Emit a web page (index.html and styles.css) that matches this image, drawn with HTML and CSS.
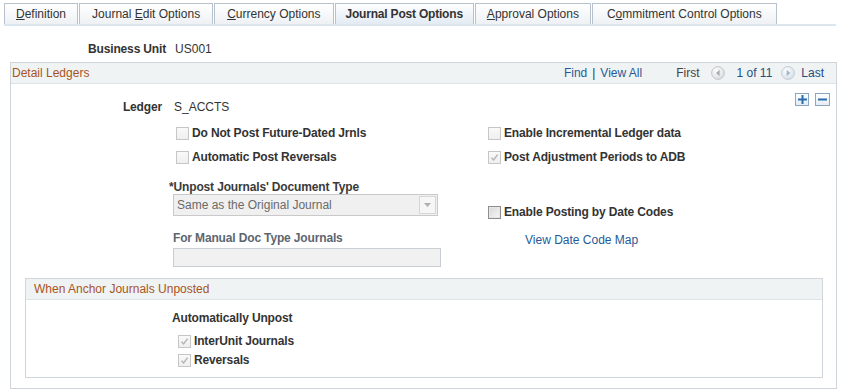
FILE: index.html
```html
<!DOCTYPE html>
<html>
<head>
<meta charset="utf-8">
<link rel="stylesheet" href="styles.css">
</head>
<body>
<div class="tabs">
  <div class="tab"><span><u>D</u>efinition</span></div>
  <div class="tab"><span>Journal <u>E</u>dit Options</span></div>
  <div class="tab"><span><u>C</u>urrency Options</span></div>
  <div class="tab active"><span>Journal Post Options</span></div>
  <div class="tab"><span><u>A</u>pproval Options</span></div>
  <div class="tab"><span>C<u>o</u>mmitment Control Options</span></div>
</div>

<div class="bu-row">
  <span class="lbl bu-lbl">Business Unit</span>
  <span class="val">US001</span>
</div>

<section class="box outer">
  <div class="box-head">
    <span class="box-title">Detail Ledgers</span>
    <div class="nav">
      <a class="link">Find</a><span class="sep">|</span><a class="link">View All</a>
      <span class="first">First</span>
      <svg class="navicon" width="14" height="14" viewBox="0 0 14 14"><defs><radialGradient id="g1" cx="0.4" cy="0.35" r="0.7"><stop offset="0" stop-color="#ffffff"/><stop offset="1" stop-color="#d6d9dc"/></radialGradient></defs><circle cx="7" cy="7" r="6.4" fill="url(#g1)" stroke="#c4c8cc" stroke-width="1"/><path d="M8.6 3.8 L4.9 7 L8.6 10.2 Z" fill="#a9adb1"/></svg>
      <span class="count">1 of 11</span>
      <svg class="navicon" width="14" height="14" viewBox="0 0 14 14"><defs><radialGradient id="g2" cx="0.4" cy="0.35" r="0.7"><stop offset="0" stop-color="#ffffff"/><stop offset="1" stop-color="#d3dde8"/></radialGradient></defs><circle cx="7" cy="7" r="6.4" fill="url(#g2)" stroke="#c3ccd6" stroke-width="1"/><path d="M5.6 3.8 L9.3 7 L5.6 10.2 Z" fill="#9fb5cc"/></svg>
      <a class="link last">Last</a>
    </div>
  </div>
  <div class="box-body">
    <div class="ledger-row">
      <div class="ledger">
        <span class="lbl ledger-lbl">Ledger</span>
        <span class="val">S_ACCTS</span>
      </div>
      <div class="rowbtns">
        <span class="rbtn"><svg width="9" height="9" viewBox="0 0 9 9"><path d="M3.5 0h2v3.5H9v2H5.5V9h-2V5.5H0v-2h3.5z" fill="#2a6cad"/></svg></span>
        <span class="rbtn minus"><svg width="9" height="9" viewBox="0 0 9 9"><path d="M0 3.5h9v2H0z" fill="#2a6cad"/></svg></span>
      </div>
    </div>

    <div class="cols">
      <div class="col-left">
        <label class="cb-row"><span class="cb dis"></span><span class="cb-lbl">Do Not Post Future-Dated Jrnls</span></label>
        <label class="cb-row"><span class="cb dis"></span><span class="cb-lbl">Automatic Post Reversals</span></label>
        <div class="field-lbl req">*Unpost Journals' Document Type</div>
        <div class="select">
          <span class="select-text">Same as the Original Journal</span>
          <span class="select-btn"><svg width="7" height="4" viewBox="0 0 7 4"><path d="M0 0h7L3.5 4z" fill="#b0b0b0"/></svg></span>
        </div>
        <div class="field-lbl manual">For Manual Doc Type Journals</div>
        <div class="input"></div>
      </div>
      <div class="col-right">
        <label class="cb-row"><span class="cb dis"></span><span class="cb-lbl">Enable Incremental Ledger data</span></label>
        <label class="cb-row"><span class="cb dis checked"><svg width="9" height="9" viewBox="0 0 9 9"><path d="M1.5 4.8 L3.6 7 L7.6 1.6" fill="none" stroke="#b4b4b4" stroke-width="1.4"/></svg></span><span class="cb-lbl">Post Adjustment Periods to ADB</span></label>
        <label class="cb-row dates"><span class="cb en"></span><span class="cb-lbl">Enable Posting by Date Codes</span></label>
        <a class="link map">View Date Code Map</a>
      </div>
    </div>

    <section class="box inner">
      <div class="box-head">
        <span class="box-title">When Anchor Journals Unposted</span>
      </div>
      <div class="inner-body">
        <div class="auto-lbl">Automatically Unpost</div>
        <label class="cb-row small"><span class="cb dis checked"><svg width="9" height="9" viewBox="0 0 9 9"><path d="M1.5 4.8 L3.6 7 L7.6 1.6" fill="none" stroke="#b4b4b4" stroke-width="1.4"/></svg></span><span class="cb-lbl">InterUnit Journals</span></label>
        <label class="cb-row small"><span class="cb dis checked"><svg width="9" height="9" viewBox="0 0 9 9"><path d="M1.5 4.8 L3.6 7 L7.6 1.6" fill="none" stroke="#b4b4b4" stroke-width="1.4"/></svg></span><span class="cb-lbl">Reversals</span></label>
      </div>
    </section>
  </div>
</section>
</body>
</html>
```

FILE: styles.css
```css
* { box-sizing: border-box; }
html, body { background: #ffffff; }
body {
  margin: 0;
  font-family: "Liberation Sans", Arial, sans-serif;
  font-size: 12px;
  line-height: 14px;
  color: #333333;
}

/* tabs */
.tabs {
  display: flex;
  gap: 1px;
  margin: 3px 0 0 4px;
  width: 832px;
  border-bottom: 2px solid #dce6ef;
}
.tab {
  height: 21px;
  padding: 0 11px;
  border: 1px solid #b7c2cc;
  border-bottom: none;
  background: linear-gradient(#ffffff, #eef1f4);
  color: #333333;
  display: flex;
  align-items: center;
  white-space: nowrap;
}
.tab:nth-child(2), .tab:nth-child(3) { padding: 0 12px; }
.tab:nth-child(6) { padding: 0 14px; }
.tab u { text-decoration: underline; }
.tab.active {
  font-weight: bold;
  letter-spacing: -0.2px;
  padding: 0 10px;
  background: linear-gradient(#fdfeff, #e3ebf3);
}

/* business unit */
.bu-row {
  display: flex;
  margin-top: 16px;
  padding-left: 88px;
  gap: 9px;
}
.lbl { font-weight: bold; letter-spacing: -0.15px; color: #333; }
.val { color: #333; }

/* boxes */
.box {
  border: 1px solid #cfd5da;
  background: #fff;
}
.outer {
  margin: 6px 0 0 10px;
  width: 827px;
  height: 327px;
}
.box-head {
  height: 21px;
  background: #eff3f4;
  border-bottom: 1px solid #dde2e6;
  display: flex;
  align-items: center;
  justify-content: space-between;
}
.box-title {
  color: #a8551c;
  padding-left: 1px;
}
.nav {
  display: flex;
  align-items: center;
  padding-right: 12px;
}
.link { color: #1f5b98; text-decoration: none; }
.sep { color: #333; margin: 0 5px; }
.first { color: #444; margin-left: 34px; margin-right: 11px; }
.navicon { display: block; flex: none; }
.count { color: #24507f; margin: 0 9px 0 12px; }
.last { color: #1f4b7e; margin-left: 6px; }

.box-body { padding: 9px 6px 0 0; }

.ledger-row {
  display: flex;
  justify-content: space-between;
  align-items: flex-start;
}
.ledger { display: flex; gap: 12px; margin-top: 7px; }
.ledger-lbl { width: 151px; text-align: right; }
.rowbtns { display: flex; gap: 6px; }
.rbtn {
  width: 14px; height: 13px;
  border: 1px solid #8aa6c1;
  background: linear-gradient(#ffffff, #e4ebf2);
  display: flex; align-items: center; justify-content: center;
}
.rbtn.minus { width: 15px; }

.cols { display: flex; margin-top: 12px; }
.col-left { width: 314px; padding-left: 162px; box-sizing: content-box; }
.col-right { padding-left: 1px; }

.cb-row {
  display: flex;
  align-items: center;
  height: 14px;
  margin-bottom: 10px;
}
.col-left .cb-row { padding-left: 3px; }
.cb {
  width: 13px; height: 13px;
  border: 1px solid #c6c6c6;
  background: linear-gradient(#f9f9f9, #efefef);
  margin-right: 3px;
  display: flex; align-items: center; justify-content: center;
  flex: none;
}
.cb.en {
  border: 1px solid #8e8e8e;
  background: linear-gradient(135deg, #d8d8d8, #f7f7f7);
  box-shadow: inset 0 0 0 1px #e6e6e6;
}
.cb-lbl { font-weight: bold; letter-spacing: -0.15px; color: #333; }

.field-lbl { font-weight: bold; letter-spacing: -0.15px; height: 13px; line-height: 13px; }
.field-lbl.req { margin: 17px 0 0 -4px; color: #3a3a3a; }
.field-lbl.manual { margin-top: 16px; color: #5c6670; }

.select {
  margin-top: 0;
  width: 265px;
  height: 22px;
  border: 1px solid #c9c9c9;
  background: #f0f0f0;
  display: flex;
  align-items: center;
  justify-content: space-between;
}
.select-text { color: #6a6a6a; padding-left: 3px; }
.select-btn {
  width: 17px; height: 18px;
  margin-right: 1px;
  border: 1px solid #d6d6d6;
  background: #f6f6f6;
  display: flex; align-items: center; justify-content: center;
}
.input {
  margin-top: 3px;
  width: 268px;
  height: 19px;
  border: 1px solid #c8ced4;
  background: #f1f1f1;
}

.cb-row.dates { margin-top: 41px; margin-bottom: 14px; }
.map { display: block; margin-left: 37px; }

.inner {
  margin: 11px 0 0 14px;
  width: 798px;
  height: 100px;
}
.inner .box-title { padding-left: 8px; }
.inner-body { padding: 11px 0 0 146px; }
.auto-lbl { font-weight: bold; letter-spacing: -0.15px; margin-bottom: 9px; }
.cb-row.small { padding-left: 6px; margin-bottom: 5px; }
```
